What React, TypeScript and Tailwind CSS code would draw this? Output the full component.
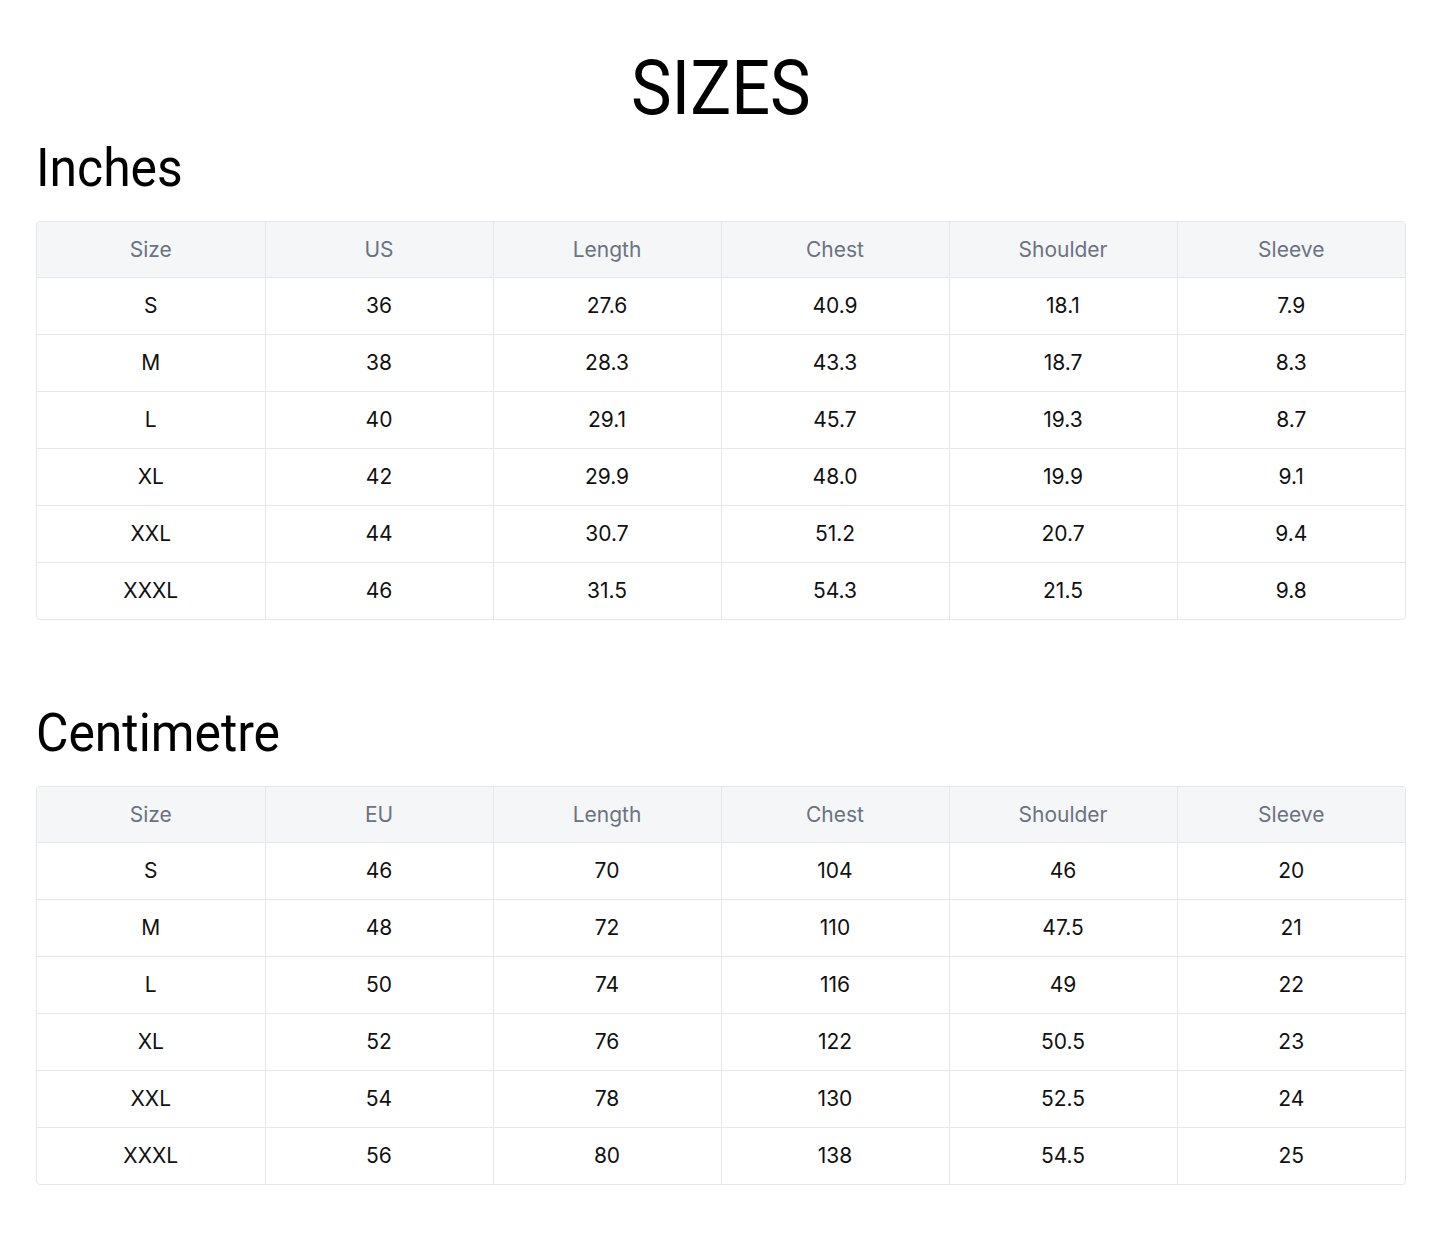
const headFont = { fontFamily: "Roboto, 'Liberation Sans', sans-serif" };

const inches = {
  title: "Inches",
  cols: ["Size", "US", "Length", "Chest", "Shoulder", "Sleeve"],
  rows: [
    ["S", "36", "27.6", "40.9", "18.1", "7.9"],
    ["M", "38", "28.3", "43.3", "18.7", "8.3"],
    ["L", "40", "29.1", "45.7", "19.3", "8.7"],
    ["XL", "42", "29.9", "48.0", "19.9", "9.1"],
    ["XXL", "44", "30.7", "51.2", "20.7", "9.4"],
    ["XXXL", "46", "31.5", "54.3", "21.5", "9.8"],
  ],
};

const cm = {
  title: "Centimetre",
  cols: ["Size", "EU", "Length", "Chest", "Shoulder", "Sleeve"],
  rows: [
    ["S", "46", "70", "104", "46", "20"],
    ["M", "48", "72", "110", "47.5", "21"],
    ["L", "50", "74", "116", "49", "22"],
    ["XL", "52", "76", "122", "50.5", "23"],
    ["XXL", "54", "78", "130", "52.5", "24"],
    ["XXXL", "56", "80", "138", "54.5", "25"],
  ],
};

function SizeTable({ data }: { data: typeof inches }) {
  return (
    <section>
      <h2
        className="origin-left scale-x-[0.94] text-[53px] leading-none text-black"
        style={headFont}
      >
        {data.title}
      </h2>
      <div className="mt-[26px] overflow-hidden rounded border border-[#e5e7eb] font-['Inter',sans-serif] text-[21px]">
        <table className="w-full table-fixed border-collapse">
          <thead>
            <tr className="bg-[#f5f6f8]">
              {data.cols.map((c, i) => (
                <th
                  key={c}
                  className={`h-[55px] font-normal text-[#6b7280] ${i > 0 ? "border-l border-[#e5e7eb]" : ""}`}
                >
                  {c}
                </th>
              ))}
            </tr>
          </thead>
          <tbody>
            {data.rows.map((row) => (
              <tr key={row[0]} className="border-t border-[#e5e7eb]">
                {row.map((v, i) => (
                  <td
                    key={i}
                    className={`h-[57px] text-center text-[#111] ${i > 0 ? "border-l border-[#e5e7eb]" : ""}`}
                  >
                    {v}
                  </td>
                ))}
              </tr>
            ))}
          </tbody>
        </table>
      </div>
    </section>
  );
}

export default function App() {
  return (
    <div className="min-h-[1243px] bg-white pl-[36px] pr-[39px] pt-[50px]">
      <h1 className="text-center text-[76px] leading-none text-black" style={headFont}>
        <span className="inline-block scale-x-[0.9]">SIZES</span>
      </h1>
      <div className="mt-[16px]">
        <SizeTable data={inches} />
      </div>
      <div className="mt-[87px]">
        <SizeTable data={cm} />
      </div>
    </div>
  );
}
